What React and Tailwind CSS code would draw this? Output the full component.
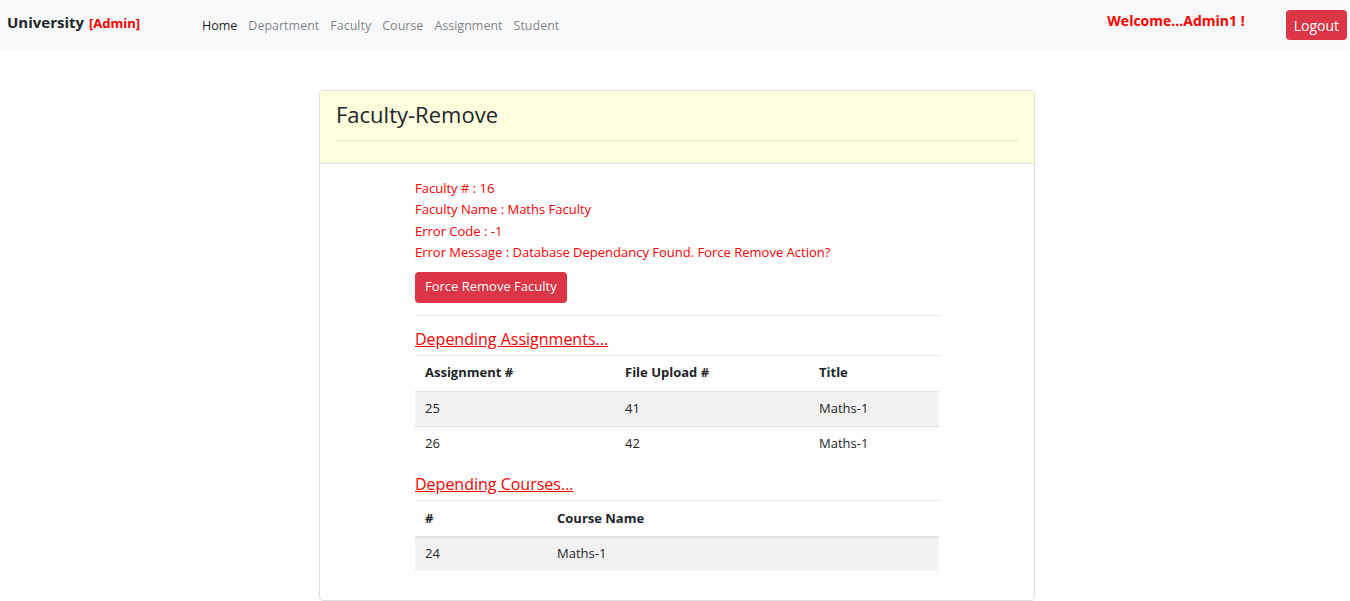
import React from "react";

const navLinks = ["Home", "Department", "Faculty", "Course", "Assignment", "Student"];

const info = [
  "Faculty # : 16",
  "Faculty Name : Maths Faculty",
  "Error Code : -1",
  "Error Message : Database Dependancy Found. Force Remove Action?",
];

const assignments = [
  { id: 25, file: 41, title: "Maths-1" },
  { id: 26, file: 42, title: "Maths-1" },
];

const courses = [{ id: 24, name: "Maths-1" }];

const App = () => {
  return (
    <div className="min-h-[601px] bg-white text-[#212529] font-['Open_Sans',sans-serif]">
      {/* Navbar */}
      <nav className="h-[50px] bg-[#f8f9fa] flex items-center pl-[7px] pr-[3px]">
        <div className="w-[195px] flex items-baseline gap-[5px] -mt-[6px]">
          <span className="text-[15px] font-bold text-[#212529]">University</span>
          <span className="text-[13px] font-bold text-[#ff0000]">[Admin]</span>
        </div>
        <ul className="flex gap-[11px] text-[12.5px] mt-[3px]">
          {navLinks.map((link, i) => (
            <li key={link} className={i === 0 ? "text-black/90" : "text-black/50"}>
              {link}
            </li>
          ))}
        </ul>
        <div className="ml-auto flex items-center">
          <span className="text-[14px] font-bold text-[#ff0000] mr-[41px] -mt-[10px]">Welcome...Admin1 !</span>
          <button className="h-[30px] px-[8px] rounded bg-[#dc3545] text-white text-[14px]">Logout</button>
        </div>
      </nav>

      {/* Card */}
      <div className="w-[716px] ml-[319px] mt-[40px] border border-[#dfdfdf] rounded">
        <div className="bg-[#ffffe0] border-b border-[#dfdfdf] px-[16px] pt-[8px] pb-[22px]">
          <h2 className="text-[22px] font-normal leading-[30px] text-[#212529]">Faculty-Remove</h2>
          <hr className="mt-[11px] border-t border-[#e4e4c8]" />
        </div>

        <div className="w-[524px] mx-auto pt-[14px] pb-[29px] text-[13px]">
          <div className="text-[#ff0000]">
            {info.map((line) => (
              <p key={line} className="leading-[21.4px]">{line}</p>
            ))}
          </div>
          <button className="mt-[8px] h-[31px] px-[10px] rounded bg-[#dc3545] text-white text-[13px]">
            Force Remove Faculty
          </button>
          <hr className="mt-[12px] border-t border-[#dee2e6]" />

          <h4 className="mt-[13px] text-[16px] leading-[20px] text-[#ff0000] underline">Depending Assignments...</h4>
          <table className="mt-[6px] w-full border-collapse text-[13px]">
            <thead>
              <tr className="border-t border-[#dee2e6]">
                <th className="w-[200px] h-[36px] px-[10px] text-left font-bold">Assignment #</th>
                <th className="w-[194px] px-[10px] text-left font-bold">File Upload #</th>
                <th className="px-[10px] text-left font-bold">Title</th>
              </tr>
            </thead>
            <tbody>
              {assignments.map((a, i) => (
                <tr key={a.id} className={`border-t border-[#dee2e6] ${i % 2 === 0 ? "bg-[#f2f2f2]" : ""}`}>
                  <td className="h-[35px] px-[10px]">{a.id}</td>
                  <td className="px-[10px]">{a.file}</td>
                  <td className="px-[10px]">{a.title}</td>
                </tr>
              ))}
            </tbody>
          </table>

          <h4 className="mt-[13px] text-[16px] leading-[20px] text-[#ff0000] underline">Depending Courses...</h4>
          <table className="mt-[6px] w-full border-collapse text-[13px]">
            <thead>
              <tr className="border-t border-b-2 border-[#dee2e6]">
                <th className="w-[132px] h-[36px] px-[10px] text-left font-bold">#</th>
                <th className="px-[10px] text-left font-bold">Course Name</th>
              </tr>
            </thead>
            <tbody>
              {courses.map((c) => (
                <tr key={c.id} className="bg-[#f2f2f2]">
                  <td className="h-[34px] px-[10px]">{c.id}</td>
                  <td className="px-[10px]">{c.name}</td>
                </tr>
              ))}
            </tbody>
          </table>
        </div>
      </div>
    </div>
  );
};

export default App;
